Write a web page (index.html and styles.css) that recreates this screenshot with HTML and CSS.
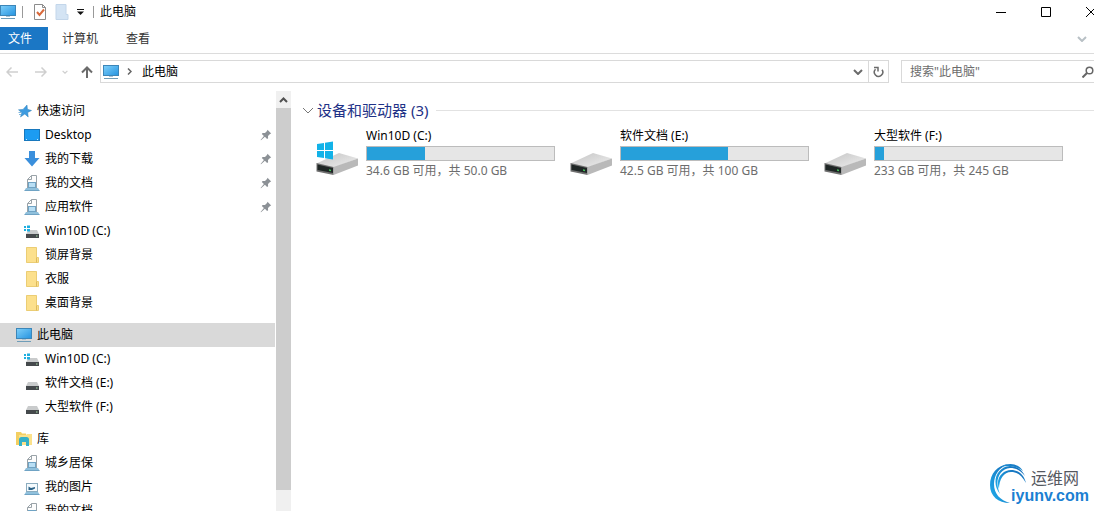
FILE: index.html
```html
<!DOCTYPE html>
<html lang="zh-CN">
<head>
    <meta charset="UTF-8">
    <meta name="viewport" content="width=device-width, initial-scale=1.0">
    <title>此电脑</title>
    <link rel="stylesheet" href="styles.css">
</head>
<body>
    <!-- shared icons -->
    <svg class="icon-defs" width="0" height="0" aria-hidden="true">
        <defs>
            <linearGradient id="screen-fill" x1="0" y1="0" x2="1" y2="1">
                <stop offset="0" stop-color="#7fd0fa"/>
                <stop offset="1" stop-color="#2493e0"/>
            </linearGradient>
            <linearGradient id="drive-top" x1="0" y1="0" x2="1" y2="1">
                <stop offset="0" stop-color="#c4c4c4"/>
                <stop offset="1" stop-color="#efefef"/>
            </linearGradient>
            <linearGradient id="logo-fill" x1="0" y1="1" x2="1" y2="0">
                <stop offset="0" stop-color="#1fb0ee"/>
                <stop offset="1" stop-color="#1566b4"/>
            </linearGradient>
            <symbol id="icon-pc" viewBox="0 0 16 16">
                <rect x="0.5" y="1.5" width="15" height="10" fill="url(#screen-fill)" stroke="#3c86b8"/>
                <path d="M6 12h4v1H6z" fill="#a9c3d3"/>
                <path d="M1 14.5h14" stroke="#6f9db8"/>
            </symbol>
            <symbol id="icon-star" viewBox="0 0 16 16">
                <path d="M11 2l.4 4.300 4.100 1.200-3.800 2 .5 4.500-3.400-3L4.500 14l1.300-4.300L2.500 6.800l4.500-.4z" fill="#3d9be0" stroke="#2f80b8" stroke-width=".5"/>
                <path d="M2.500 9.500h3M3 11.500h2" stroke="#7fb6dc"/>
            </symbol>
            <symbol id="icon-desktop" viewBox="0 0 16 16">
                <rect x="0.500" y="2.500" width="15" height="11" fill="#1c9cf2" stroke="#1878bd"/>
                <path d="M2 12.500h1M13 12.500h1" stroke="#c9e8fc"/>
            </symbol>
            <symbol id="icon-down" viewBox="0 0 16 16">
                <path d="M5 0h6v7h4.500L8 15.500.5 7H5z" fill="#3a8fdc"/>
            </symbol>
            <symbol id="icon-doc" viewBox="0 0 16 16">
                <path d="M3.500 13V4.500l4-4h5V13z" fill="#fdfdfd" stroke="#9aa3a9"/>
                <path d="M3.500 4.500h4v-4" fill="none" stroke="#9aa3a9"/>
                <rect x="4.500" y="7.500" width="7" height="5" fill="#b9dff5" stroke="#6fa3c4"/>
                <path d="M2 13h12l1.500 2.500H.5z" fill="#8fc0dc"/>
                <path d="M.5 15.500h15" stroke="#6fa3c4"/>
            </symbol>
            <symbol id="icon-picture" viewBox="0 0 16 16">
                <rect x="2.500" y="4.500" width="11" height="8" fill="#f4fafd" stroke="#8bacbf"/>
                <path d="M4.500 11V7.500L7 9l4-1v1.500L8 11z" fill="#2d6388"/>
                <path d="M2 13h12l1.500 2.500H.5z" fill="#8fc0dc"/>
                <path d="M.5 15.500h15" stroke="#6fa3c4"/>
            </symbol>
            <symbol id="icon-drive" viewBox="0 0 16 16">
                <path d="M4 7h9l2 4H2z" fill="#c9cbcc"/>
                <path d="M2 11h13v4H2z" fill="#45494c"/>
                <path d="M12 13h1.500" stroke="#a8dfa8"/>
            </symbol>
            <symbol id="icon-sysdrive" viewBox="0 0 16 16">
                <path d="M5 7h8l2 4H2z" fill="#c9cbcc"/>
                <path d="M2 11h13v4H2z" fill="#45494c"/>
                <path d="M12 13h1.500" stroke="#a8dfa8"/>
                <path d="M0 3h2v2H0zM3 2.500h3V5H3zM0 6h2v2H0zM3 6h3v2.500H3z" fill="#1eaee0"/>
            </symbol>
            <symbol id="icon-folder" viewBox="0 0 16 16">
                <path d="M2 .5h11v10h1v5H2z" fill="#fce08c"/>
                <path d="M2.500.5h10v10h2v5h-12z" fill="none" stroke="#ebcd74"/>
                <path d="M12.500 10.500v5" stroke="#dcb95c"/>
            </symbol>
            <symbol id="icon-library" viewBox="0 0 16 16">
                <path d="M0 1h5l1 1.500h4V14H0z" fill="#f3cf62"/>
                <path d="M3 4h7l1-1h5v11H3z" fill="#fbe18b"/>
                <path d="M3 15V8.500Q3 6 5.500 6h5Q13 6 13 8.500V15h-3v-4H6v4z" fill="#35b0c8"/>
            </symbol>
            <symbol id="icon-pin" viewBox="0 0 12 12">
                <path d="M7.500.8l3.700 3.700-1.200.4-2 2 .1 2.300-1 .8-2.200-2.200L1 11.300l-.4-.4 3.300-3.800L1.800 5l.8-1 2.400.1 2-2z" fill="#8c9196"/>
            </symbol>
            <symbol id="icon-bigdrive" viewBox="0 0 44 24">
                <path d="M1.500 11.500L24 1l19 5.500L19 15.500z" fill="url(#drive-top)"/>
                <path d="M18.500 15L43 6.500v7L18.500 23z" fill="#b9b9b9"/>
                <path d="M1.500 11l17 4v8l-17-3.500z" fill="#707070"/>
                <path d="M2.500 12.500l15.500 3.500v5L2.500 18z" fill="#1f2625"/>
                <path d="M14 17.300l2 .4v1.500l-2-.4z" fill="#43c35a"/>
            </symbol>
            <symbol id="icon-chevron" viewBox="0 0 10 6">
                <path d="M1 1l4 4 4-4" fill="none" stroke="currentColor" stroke-width="2"/>
            </symbol>
        </defs>
    </svg>

    <div class="explorer">
        <header class="title-bar">
            <svg class="icon"><use href="#icon-pc"/></svg>
            <span class="divider"></span>
            <button class="quick-btn" aria-label="属性">
                <svg class="icon" viewBox="0 0 16 16">
                    <path d="M2.500.5h8l3 3v12h-11z" fill="#fff" stroke="#8c8c8c"/>
                    <path d="M10.500.5v3h3" fill="none" stroke="#8c8c8c"/>
                    <path d="M5 8l2.500 3L12 5.500" fill="none" stroke="#d9693b" stroke-width="2"/>
                </svg>
            </button>
            <button class="quick-btn" aria-label="新建文件夹">
                <svg class="icon" viewBox="0 0 16 16">
                    <path d="M2 .5h10v10h2v5H2z" fill="#d4e4f4" stroke="#c3d6ea"/>
                </svg>
            </button>
            <button class="quick-more" aria-label="自定义快速访问工具栏">
                <svg width="7" height="6" viewBox="0 0 7 6"><path d="M0 .5h7" stroke="#111"/><path d="M0 2.500h7L3.500 6z" fill="#111"/></svg>
            </button>
            <span class="divider"></span>
            <h1 class="window-title">此电脑</h1>
            <div class="window-controls">
                <button class="control-btn" aria-label="最小化"><svg width="10" height="10" viewBox="0 0 10 10"><path d="M0 5.500h10" stroke="#000"/></svg></button>
                <button class="control-btn" aria-label="最大化"><svg width="10" height="10" viewBox="0 0 10 10"><path d="M.5.5h9v9h-9z" fill="none" stroke="#000"/></svg></button>
                <button class="control-btn" aria-label="关闭"><svg width="10" height="10" viewBox="0 0 10 10"><path d="M0 0l10 10M10 0L0 10" stroke="#000"/></svg></button>
            </div>
        </header>

        <nav class="tabs">
            <button class="tab tab-file">文件</button>
            <button class="tab">计算机</button>
            <button class="tab">查看</button>
            <button class="expand-btn" aria-label="展开功能区"><svg class="chevron"><use href="#icon-chevron"/></svg></button>
        </nav>

        <div class="toolbar">
            <div class="nav-buttons">
                <button class="nav-btn" aria-label="后退"><svg width="12" height="10" viewBox="0 0 12 10"><path d="M12 5H1M5.500.5L1 5l4.500 4.500" fill="none" stroke="currentColor" stroke-width="1.500"/></svg></button>
                <button class="nav-btn" aria-label="前进"><svg width="12" height="10" viewBox="0 0 12 10"><path d="M0 5h11M6.500.5L11 5 6.500 9.500" fill="none" stroke="currentColor" stroke-width="1.500"/></svg></button>
                <button class="nav-btn nav-recent" aria-label="最近浏览的位置"><svg width="6" height="4" viewBox="0 0 10 6"><path d="M1 1l4 4 4-4" fill="none" stroke="currentColor" stroke-width="2"/></svg></button>
                <button class="nav-btn nav-up" aria-label="上移"><svg width="12" height="12" viewBox="0 0 12 12"><path d="M6 12V1.500M1 6.500l5-5 5 5" fill="none" stroke="currentColor" stroke-width="2"/></svg></button>
            </div>
            <div class="address">
                <svg class="icon"><use href="#icon-pc"/></svg>
                <svg class="crumb-arrow" width="5" height="7" viewBox="0 0 5 7"><path d="M1 .5l3 3-3 3" fill="none" stroke="#666" stroke-width="1.500"/></svg>
                <a class="crumb" href="#">此电脑</a>
                <button class="address-btn" aria-label="历史记录"><svg class="chevron"><use href="#icon-chevron"/></svg></button>
                <button class="address-btn refresh-btn" aria-label="刷新">
                    <svg width="11" height="12" viewBox="0 0 11 12"><path d="M2.500 3.200a4.200 4.200 0 1 0 6.500.5M1 1.500h4v4" fill="none" stroke="currentColor" stroke-width="1.500"/></svg>
                </button>
            </div>
            <form class="search">
                <input class="search-input" type="text" aria-label="搜索" placeholder='搜索"此电脑"'>
                <button class="search-btn" type="button" aria-label="开始搜索">
                    <svg width="12" height="12" viewBox="0 0 12 12"><circle cx="7.500" cy="4.500" r="3.300" fill="none" stroke="#666" stroke-width="1.500"/><path d="M5 7l-4.500 4.500" stroke="#666" stroke-width="2"/></svg>
                </button>
            </form>
        </div>

        <div class="content">
            <nav class="sidebar">
                <ul class="tree">
                    <li><a class="node root" href="#"><svg class="icon"><use href="#icon-star"/></svg>快速访问</a></li>
                    <li><a class="node" href="#"><svg class="icon"><use href="#icon-desktop"/></svg>Desktop<svg class="pin"><use href="#icon-pin"/></svg></a></li>
                    <li><a class="node" href="#"><svg class="icon"><use href="#icon-down"/></svg>我的下载<svg class="pin"><use href="#icon-pin"/></svg></a></li>
                    <li><a class="node" href="#"><svg class="icon"><use href="#icon-doc"/></svg>我的文档<svg class="pin"><use href="#icon-pin"/></svg></a></li>
                    <li><a class="node" href="#"><svg class="icon"><use href="#icon-doc"/></svg>应用软件<svg class="pin"><use href="#icon-pin"/></svg></a></li>
                    <li><a class="node" href="#"><svg class="icon"><use href="#icon-sysdrive"/></svg>Win10D (C:)</a></li>
                    <li><a class="node" href="#"><svg class="icon"><use href="#icon-folder"/></svg>锁屏背景</a></li>
                    <li><a class="node" href="#"><svg class="icon"><use href="#icon-folder"/></svg>衣服</a></li>
                    <li><a class="node" href="#"><svg class="icon"><use href="#icon-folder"/></svg>桌面背景</a></li>
                </ul>
                <ul class="tree">
                    <li><a class="node root selected" href="#"><svg class="icon"><use href="#icon-pc"/></svg>此电脑</a></li>
                    <li><a class="node" href="#"><svg class="icon"><use href="#icon-sysdrive"/></svg>Win10D (C:)</a></li>
                    <li><a class="node" href="#"><svg class="icon"><use href="#icon-drive"/></svg>软件文档 (E:)</a></li>
                    <li><a class="node" href="#"><svg class="icon"><use href="#icon-drive"/></svg>大型软件 (F:)</a></li>
                </ul>
                <ul class="tree">
                    <li><a class="node root" href="#"><svg class="icon"><use href="#icon-library"/></svg>库</a></li>
                    <li><a class="node" href="#"><svg class="icon"><use href="#icon-doc"/></svg>城乡居保</a></li>
                    <li><a class="node" href="#"><svg class="icon"><use href="#icon-picture"/></svg>我的图片</a></li>
                    <li><a class="node" href="#"><svg class="icon"><use href="#icon-doc"/></svg>我的文档</a></li>
                </ul>
            </nav>
            <div class="scrollbar">
                <button class="scroll-up" aria-label="向上滚动"><svg width="9" height="6" viewBox="0 0 9 6"><path d="M1 5l3.500-3.500L8 5" fill="none" stroke="#505050" stroke-width="2"/></svg></button>
                <div class="scroll-thumb"></div>
            </div>

            <main class="main">
                <h2 class="group-title"><svg class="group-chevron" viewBox="0 0 12 7"><path d="M1 1l5 5 5-5" fill="none" stroke="#777"/></svg>设备和驱动器 (3)</h2>
                <div class="drives">
                    <a class="drive" href="#">
                        <svg class="drive-icon" viewBox="0 0 44 36">
                            <use href="#icon-bigdrive" y="12" width="44" height="24"/>
                            <path d="M2 4l7-1v7H2zM10 2.800L18 1.500V10h-8zM2 11h7v7l-7-1zM10 11h8v8.500l-8-1.200z" fill="#12b2e8"/>
                        </svg>
                        <div class="drive-info">
                            <span class="drive-name">Win10D (C:)</span>
                            <div class="bar"><div class="bar-fill" style="width: 31%"></div></div>
                            <span class="drive-space">34.6 GB 可用，共 50.0 GB</span>
                        </div>
                    </a>
                    <a class="drive" href="#">
                        <svg class="drive-icon" viewBox="0 0 44 36"><use href="#icon-bigdrive" y="12" width="44" height="24"/></svg>
                        <div class="drive-info">
                            <span class="drive-name">软件文档 (E:)</span>
                            <div class="bar"><div class="bar-fill" style="width: 57%"></div></div>
                            <span class="drive-space">42.5 GB 可用，共 100 GB</span>
                        </div>
                    </a>
                    <a class="drive" href="#">
                        <svg class="drive-icon" viewBox="0 0 44 36"><use href="#icon-bigdrive" y="12" width="44" height="24"/></svg>
                        <div class="drive-info">
                            <span class="drive-name">大型软件 (F:)</span>
                            <div class="bar"><div class="bar-fill" style="width: 5%"></div></div>
                            <span class="drive-space">233 GB 可用，共 245 GB</span>
                        </div>
                    </a>
                </div>
            </main>
        </div>

        <div class="watermark">
            <svg class="watermark-logo" viewBox="0 0 40 42">
                <path d="M20 1C8 2 1 11 1 22c0 11 8 18 20 18C11 37 5 31 5 21 5 12 10 4 20 1z" fill="url(#logo-fill)"/>
                <path d="M11 31C2 20 7 4 21 3c7 0 12 4 15 10-5-6-9-8-15-8C10 6 5 18 11 31z" fill="url(#logo-fill)"/>
                <path d="M10 26C6 15 14 7 22 7c8 0 13 5 15 13-4-7-8-11-15-11-7 0-12 7-12 17z" fill="url(#logo-fill)"/>
                <path d="M12 4C19-1 29 0 34 8 27 3 20 2 12 4z" fill="url(#logo-fill)"/>
            </svg>
            <div class="watermark-text">
                <span class="watermark-name">运维网</span>
                <span class="watermark-site">iyunv.com</span>
            </div>
        </div>
    </div>
</body>
</html>
```

FILE: styles.css
```css
* {
    box-sizing: border-box;
}

body {
    margin: 0;
    font-family: "Noto Sans", "Noto Sans CJK SC", sans-serif;
    font-size: 12px;
    line-height: 16px;
    color: #1a1a1a;
    background-color: #ffffff;
    overflow: hidden;
}

button {
    display: flex;
    align-items: center;
    justify-content: center;
    padding: 0;
    border: none;
    background: none;
    font: inherit;
    color: inherit;
}

a {
    color: inherit;
    text-decoration: none;
}

.icon-defs {
    position: absolute;
}

.icon {
    display: block;
    width: 16px;
    height: 16px;
    flex-shrink: 0;
}

.chevron {
    width: 10px;
    height: 6px;
}

.explorer {
    position: relative;
    height: 100vh;
    display: flex;
    flex-direction: column;
    overflow: hidden;
}

/* title bar */
.title-bar {
    display: flex;
    align-items: center;
    height: 24px;
    flex-shrink: 0;
}

.divider {
    width: 1px;
    height: 12px;
    margin: 0 6px;
    background-color: #999999;
}

.quick-btn {
    width: 22px;
    height: 22px;
}

.quick-more {
    width: 14px;
    height: 22px;
}

.window-title {
    margin: 0;
    font-size: 12px;
    font-weight: normal;
    color: #000000;
}

.window-controls {
    display: flex;
    margin-left: auto;
    margin-right: -19px;
}

.control-btn {
    width: 45px;
    height: 24px;
}

/* ribbon tabs */
.tabs {
    display: flex;
    height: 30px;
    padding: 3px 7px 3px 0;
    border-bottom: 1px solid #dcdcdc;
    flex-shrink: 0;
}

.tab {
    padding: 0 14px;
    color: #333333;
}

.tab-file {
    width: 48px;
    padding: 0 16px 0 8px;
    background-color: #1b77c5;
    color: #ffffff;
    white-space: nowrap;
}

.expand-btn {
    margin-left: auto;
    color: #b8c0c5;
}

/* address row */
.toolbar {
    display: flex;
    padding-top: 6px;
    height: 37px;
    flex-shrink: 0;
}

.nav-buttons {
    display: flex;
    align-items: center;
    width: 100px;
    height: 23px;
    flex-shrink: 0;
}

.nav-btn {
    width: 29px;
    height: 23px;
    padding-right: 6px;
    color: #cfcfcf;
}

.nav-recent {
    width: 14px;
    padding: 0;
}

.nav-up {
    width: 26px;
    padding: 0;
    margin-left: auto;
    color: #6b6b6b;
}

.address {
    display: flex;
    align-items: center;
    flex: 1;
    height: 23px;
    padding-left: 2px;
    margin-right: 12px;
    border: 1px solid #d9d9d9;
}

.crumb-arrow {
    margin: 0 10px 0 8px;
}

.crumb {
    color: #000000;
}

.address-btn {
    width: 20px;
    height: 21px;
    color: #6b6b6b;
}

.crumb + .address-btn {
    margin-left: auto;
}

.refresh-btn {
    border-left: 1px solid #d9d9d9;
}

.search {
    display: flex;
    align-items: center;
    width: 193px;
    height: 23px;
    border: 1px solid #d9d9d9;
    border-right: none;
}

.search-input {
    flex: 1;
    min-width: 0;
    padding: 0 0 0 8px;
    border: none;
    outline: none;
    background: none;
    font: inherit;
}

.search-input::placeholder {
    color: #6d6d6d;
}

.search-btn {
    width: 12px;
}

/* body */
.content {
    display: flex;
    flex: 1;
    min-height: 0;
}

.sidebar {
    width: 276px;
    padding: 8px 1px 0 0;
    overflow: hidden;
    flex-shrink: 0;
}

.tree {
    margin: 0 0 8px;
    padding: 0;
    list-style: none;
}

.node {
    display: flex;
    align-items: center;
    gap: 5px;
    height: 24px;
    padding: 0 3px 0 24px;
    color: #000000;
}

.root {
    padding-left: 16px;
}

.selected {
    background-color: #d9d9d9;
}

.pin {
    width: 12px;
    height: 12px;
    margin-left: auto;
}

.scrollbar {
    display: flex;
    flex-direction: column;
    width: 15px;
    margin-right: 1px;
    background-color: #f0f0f0;
    flex-shrink: 0;
}

.scroll-up {
    height: 17px;
    flex-shrink: 0;
}

.scroll-thumb {
    height: 91%;
    background-color: #cdcdcd;
}

.main {
    flex: 1;
    min-width: 0;
    padding: 8px 0 0 10px;
}

.group-title {
    display: flex;
    align-items: center;
    margin: 0;
    font-size: 15px;
    line-height: 22px;
    font-weight: normal;
    color: #1e3287;
}

.group-title::after {
    content: "";
    flex: 1;
    height: 1px;
    margin-left: 8px;
    background-color: #e2e2e2;
}

.group-chevron {
    width: 12px;
    height: 7px;
    margin-right: 3px;
}

.drives {
    display: grid;
    grid-template-columns: repeat(auto-fill, 254px);
    padding: 7px 0 0 13px;
}

.drive {
    display: flex;
    gap: 7px;
}

.drive-icon {
    width: 44px;
    height: 36px;
    margin-top: 12px;
}

.drive-info {
    display: flex;
    flex-direction: column;
    width: 189px;
}

.drive-name {
    color: #000000;
}

.bar {
    height: 15px;
    margin: 2px 0;
    border: 1px solid #bcbcbc;
    background-color: #e6e6e6;
}

.bar-fill {
    height: 100%;
    background-color: #26a0da;
}

.drive-space {
    color: #6d6d6d;
}

/* site mark */
.watermark {
    position: absolute;
    right: 5px;
    bottom: 6px;
    display: flex;
    align-items: flex-end;
}

.watermark-logo {
    width: 40px;
    height: 42px;
    margin-right: -18px;
}

.watermark-text {
    display: flex;
    flex-direction: column;
}

.watermark-name {
    padding-left: 20px;
    font-size: 16px;
    line-height: 18px;
    color: #55585f;
}

.watermark-site {
    font-family: "Liberation Sans", Arial, sans-serif;
    font-size: 16px;
    line-height: 18px;
    font-weight: bold;
    color: #1b80d2;
}
```
